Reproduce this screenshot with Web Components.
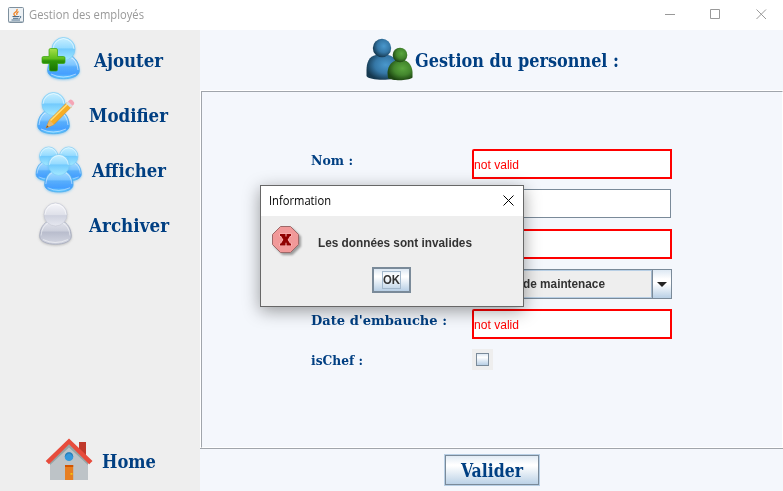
<!DOCTYPE html>
<html lang="fr"><head><meta charset="utf-8"><title>Gestion des employés</title>
<style>html,body{margin:0;width:783px;height:491px;overflow:hidden;background:#f4f7fc}</style></head>
<body><employee-app></employee-app>
<script>
const define=(name,html,cls=HTMLElement)=>customElements.define(name,class extends cls{
  constructor(){super();this.attachShadow({mode:'open'}).innerHTML=html;}
});

/* A one-line label whose glyphs are condensed to the width given in "w". */
customElements.define('fit-text',class extends HTMLElement{
  constructor(){super();this.attachShadow({mode:'open'}).innerHTML=`<style>:host{display:block;flex:none;white-space:nowrap;line-height:24px;height:24px}span{display:inline-block;transform-origin:0 50%}</style><span><slot></slot></span>`;}
  connectedCallback(){
    const s=this.shadowRoot.querySelector('span'),w=+this.getAttribute('w');
    this.style.width=w+'px';
    s.style.transform=`scaleX(${w/s.getBoundingClientRect().width})`;
  }
});

const defs=`<defs>
<linearGradient id="h" x2="0" y2="1"><stop stop-color="#c9f0ff"/><stop offset=".45" stop-color="#96dbff"/><stop offset=".5" stop-color="#72cafd"/><stop offset="1" stop-color="#a4e9ff"/></linearGradient>
<linearGradient id="b" x2="0" y2="1"><stop stop-color="#acdfff"/><stop offset=".42" stop-color="#7cc5ff"/><stop offset=".5" stop-color="#58aefc"/><stop offset=".8" stop-color="#459fff"/><stop offset="1" stop-color="#68d2ff"/></linearGradient>
<linearGradient id="gh" x2="0" y2="1"><stop stop-color="#f6f6fa"/><stop offset=".5" stop-color="#dfe1ea"/><stop offset=".55" stop-color="#cfd2df"/><stop offset="1" stop-color="#e6e8f0"/></linearGradient>
<linearGradient id="gb" x2="0" y2="1"><stop stop-color="#e4e6ee"/><stop offset=".42" stop-color="#cdd0dc"/><stop offset=".5" stop-color="#b9bdcd"/><stop offset="1" stop-color="#d4d7e2"/></linearGradient>
<linearGradient id="p" x2="0" y2="1"><stop stop-color="#a6e04a"/><stop offset=".45" stop-color="#5ebd1c"/><stop offset=".55" stop-color="#2e9608"/><stop offset="1" stop-color="#187300"/></linearGradient>
<radialGradient id="hb" cx=".6" cy=".4" r=".62"><stop stop-color="#4a98cd"/><stop offset=".55" stop-color="#3577a6"/><stop offset="1" stop-color="#163950"/></radialGradient>
<radialGradient id="hg" cx=".6" cy=".4" r=".62"><stop stop-color="#5aa63e"/><stop offset=".55" stop-color="#43862d"/><stop offset="1" stop-color="#1d4612"/></radialGradient>
<filter id="s" x="-20%" y="-20%" width="140%" height="150%"><feDropShadow dx="0" dy="1" stdDeviation="1.1" flood-color="#38a8f0" flood-opacity=".5"/></filter>
<filter id="gs" x="-20%" y="-20%" width="140%" height="150%"><feDropShadow dx="0" dy="1" stdDeviation="1" flood-color="#777" flood-opacity=".4"/></filter></defs>`;
const body='M11 18C4 20 .7 27 .7 34C1 39 8 41.7 16.500 41.700S32 39 32.300 34C32.300 27 29 20 22 18Z';
const person=(x,y,sx,sy,g='')=>`<g transform="translate(${x} ${y}) scale(${sx} ${sy})" filter="url(#${g}s)"><path d="${body}" fill="url(#${g}b)" stroke="${g?'#a5a9bb':'#4aa8ec'}" stroke-width=".8"/><path d="M2 33Q3 23 10 20M31 33Q30 23 23 20M4 37Q16 43 29 37" fill="none" stroke="#fff" stroke-opacity=".5"/><circle cx="16.500" cy="12" r="11.500" fill="url(#${g}h)" stroke="${g?'#c5c8d4':'#7accf5'}" stroke-width=".7"/><path d="M6 12Q7 3 16.500 1.500Q26 3 27 12" fill="none" stroke="#fff" stroke-opacity=".55"/></g>`;
const art={
 add:[48,48,person(12,0,1,1)+`<path d="M15.500 11.500h5.500q1.500 0 1.500 1.500v6.500h6q1.500 0 1.500 1.500v4q0 1.500-1.500 1.500h-6v6q0 1.500-1.500 1.500h-5q-1.500 0-1.500-1.500v-6H8.500q-1.500 0-1.500-1.500v-4q0-1.500 1.500-1.500h5.500v-6.500q0-1.500 1.500-1.500Z" fill="url(#p)" stroke="#35a50a" stroke-width=".7"/>`],
 edit:[48,48,person(6,0,1,1)+`<g transform="translate(-.5 -.5)"><path d="M15.500 36.500L19 28.500L36.500 11L41 15.300L23.500 33Z" fill="#f7ad24" stroke="#d88a18" stroke-width=".6"/><path d="M20 29L37.500 12" stroke="#ffe07c" stroke-width="1.600"/><path d="M15.500 36.500L19 28.500L23.500 33Z" fill="#e9b96c"/><path d="M15.500 36.500l1.200-2.700 1.500 1.500Z" fill="#765033"/><path d="M35.500 12l2-2 4.500 4.300-2 2Z" fill="#d9dee4"/><path d="M37.500 10l1.500-1.500q1.300-1 2.700 .3l1.400 1.400q1.300 1.300 .2 2.700L42 14.300Z" fill="#f5a5b5"/></g>`],
 group:[48,50,person(.5,.5,.8,.82)+person(20.500,.5,.8,.82)+person(9,8,.9,.91)],
 gray:[48,48,person(6,.5,1,1,'g')],
 home:[48,46,`<path d="M34 4h7v18h-7Z" fill="#c0392b"/><path d="M24 4L43 23v19H5V23Z" fill="#bdc3c7"/><path d="M24 5L43 24v3L24 9.500 5 27V25Z" fill="#95a5a6"/><path d="M24 .5L47.500 23l-3.300 3.300L24 6.200 4 26.300 .7 23Z" fill="#e74c3c"/><circle cx="24" cy="18.800" r="4.300" fill="#3498db"/><path d="M19.800 19Q20 14.500 24 14.300t4.200 4.700Q26 15.500 24 15.500t-4.200 3.500Z" fill="#2980b9"/><path d="M20 27h8.200v15H20Z" fill="#e67e22"/><path d="M20 27h8.200v2H20Z" fill="#d35400"/><path d="M25.500 35h2v1.800h-2Z" fill="#f1c40f"/>`],
 staff:[48,44,`<path d="M10 17C3 18 .5 25 .5 32V38C3 43 30 43 32.500 38V31C32 23 28 18 22 17Z" fill="url(#hb)"/><circle cx="16" cy="10" r="9.200" fill="url(#hb)"/><path d="M30 22.500C24 24 21.700 30 21.500 35L22 40C26 43 42 43 46.500 39.500V34C46 28 43 23.500 39 22.500Z" fill="url(#hg)"/><circle cx="34" cy="17" r="7.300" fill="url(#hg)"/>`],
 java:[16,16,`<rect x=".5" y=".5" width="15" height="15" rx="1" fill="#edf1f4" stroke="#7e909e"/><path d="M1 14.500h14" stroke="#b2c0ca"/><path d="M9 2Q9.500 4 7 5.500T7.500 9M10.500 4.500Q8 6 9 8" fill="none" stroke="#ed7e1d" stroke-width="1.200"/><path d="M4.500 9.500h6.500M5 11.300h5.500M3.500 13h8.500M11.500 9.300q2.200 0 1 1.500l-1.200 .7" fill="none" stroke="#4b6c89"/>`],
 error:[34,34,`<filter id="f" x="-20%" y="-20%" width="150%" height="150%"><feDropShadow dx="2" dy="2" stdDeviation="1.200" flood-opacity=".35"/></filter><path d="M8.500 .5H18.500L26.500 8.500V18.500L18.500 26.500H8.500L.5 18.500V8.500Z" fill="#f19999" stroke="#9d6868" filter="url(#f)"/><path d="M8 8h5.500v2l.5 1 .5-1V8H19v2h-1l-2.300 3.700L18 17.500h1v2h-4.500v-2l-.5-1.200-.5 1.200v2H8v-2h1l2.300-3.800L9 10H8Z" fill="#900000" stroke="#ffbdbd" stroke-width="1.200" paint-order="stroke"/>`]
};
customElements.define('app-icon',class extends HTMLElement{
  constructor(){super();this.attachShadow({mode:'open'});}
  connectedCallback(){const [w,h,m]=art[this.getAttribute('name')];this.shadowRoot.innerHTML=`<style>:host{display:block;flex:none;width:${w}px;height:${h}px}svg{display:block;overflow:visible}</style><svg width="${w}" height="${h}">${defs}${m}</svg>`;}
});

define('title-bar',`<style>:host{display:flex;height:30px;background:#fff;align-items:center;padding-left:8px;box-sizing:border-box;color:#999;font:12px "Open Sans",sans-serif}fit-text{margin-left:5px}svg{margin-left:auto;display:block}</style>
<app-icon name="java"></app-icon><fit-text w="115">Gestion des employés</fit-text><svg width="118" height="30" fill="none" stroke="#999"><path d="M0 14.500h10"/><path d="M45.500 9.500h9v9h-9Z"/><path d="M91.500 9.500l9.500 9.500M101 9.500l-9.500 9.500"/></svg>`);

define('menu-item',`<style>:host{display:flex;align-items:center;height:55px;color:#003f82;font:bold 18.200px "DejaVu Serif Condensed","DejaVu Serif",serif;font-stretch:condensed}</style><slot></slot>`);

define('side-menu',`<style>:host{display:flex;flex-direction:column;width:200px;background:#eee;padding-top:3px;box-sizing:border-box}
.a{padding-left:35px;gap:11px}.b{padding-left:31px;gap:10px}.c{padding-left:35px;gap:9px}.d{padding-left:33px;gap:8px}.e{margin-top:auto;margin-bottom:2px;padding-left:45px;gap:9px}.e app-icon{margin-top:-2px}</style>
<menu-item class="a"><app-icon name="add"></app-icon><fit-text w="69">Ajouter</fit-text></menu-item>
<menu-item class="b"><app-icon name="edit"></app-icon><fit-text w="79">Modifier</fit-text></menu-item>
<menu-item class="c"><app-icon name="group"></app-icon><fit-text w="74">Afficher</fit-text></menu-item>
<menu-item class="d"><app-icon name="gray"></app-icon><fit-text w="80">Archiver</fit-text></menu-item>
<menu-item class="e"><app-icon name="home"></app-icon><fit-text w="54">Home</fit-text></menu-item>`);

define('text-field',`<style>:host{display:flex;align-items:center;box-sizing:border-box;width:200px;height:30px;background:#fff;border:2px solid #f00;border-top-left-radius:2px;padding-top:2px;color:#f00;font:12px "Liberation Sans",sans-serif}
:host([plain]){border:1px solid #7a8a99;width:199px;height:29px;border-radius:0}</style><slot></slot>`);

define('combo-box',`<style>:host{display:flex;box-sizing:border-box;width:200px;height:30px;border:1px solid #7a8a99;background:#eee;color:#333;font:bold 12px "Liberation Sans",sans-serif}
.v{flex:1;min-width:0;display:flex;align-items:center;padding-left:0;box-sizing:border-box;border:1px solid #b8cfe5;border-right-color:#a3b8cc}
.v fit-text{margin-left:-15px}
.d{width:18px;flex:none;border-left:1px solid #7a8a99;background:linear-gradient(#dde8f3,#fff 32%,#fff 48%,#b8cfe5);display:flex;align-items:center;justify-content:center}</style>
<div class="v"><fit-text w="146"><slot></slot></fit-text></div><div class="d"><svg width="10" height="5"><path d="M0 0h10L5 5Z" fill="#222"/></svg></div>`);

define('check-box',`<style>:host{display:grid;place-items:center;width:21px;height:21px;background:#eee}i{display:block;box-sizing:border-box;width:13px;height:13px;border:1px solid #7a8a99;background:linear-gradient(#dde8f3,#fff 30%,#b8cfe5)}</style><i></i>`);

define('form-row',`<style>:host{display:grid;grid-template-columns:161px 200px;height:40px;align-items:start;color:#003f82;font:bold 13.600px "DejaVu Serif Condensed","DejaVu Serif",serif;font-stretch:condensed}</style><slot name="l"></slot><slot></slot>`);

define('main-area',`<style>:host{display:flex;flex-direction:column;flex:1;min-width:0;background:#f4f7fc;color:#003f82;font:bold 18.200px "DejaVu Serif Condensed","DejaVu Serif",serif;font-stretch:condensed}
header{height:61px;display:flex;align-items:center;padding-left:166px;gap:1px;box-sizing:border-box;border-bottom:1px solid #fff}
header fit-text{margin-top:2px}
.p{height:357px;box-sizing:border-box;border:1px solid #a0a5ab;border-bottom-color:#fff;border-right-color:#fff;margin-left:1px;box-shadow:-1px 0 #fff;padding:57px 0 0 109px}
.l{margin-top:-1px}
footer{flex:1;display:flex;align-items:flex-start;padding-left:244px;padding-top:5px;border-top:1px solid #a0a5ab}
button{all:unset;box-sizing:border-box;display:flex;align-items:center;justify-content:center;padding-top:2px;width:96px;height:32px;border:1px solid #b8cfe5;outline:1px solid #7a8a99;outline-offset:-2px;background:linear-gradient(#dde8f3,#fff 32%,#fff 36%,#b8cfe5)}
</style><header><app-icon name="staff"></app-icon><fit-text w="204">Gestion du personnel :</fit-text></header>
<div class="p">
<form-row><fit-text slot="l" class="l" w="42">Nom :</fit-text><text-field><fit-text w="45">not valid</fit-text></text-field></form-row>
<form-row><text-field plain></text-field><span slot="l"></span></form-row>
<form-row><span slot="l"></span><text-field></text-field></form-row>
<form-row><span slot="l"></span><combo-box>Technicien de maintenace</combo-box></form-row>
<form-row><fit-text slot="l" class="l" w="136">Date d'embauche :</fit-text><text-field><fit-text w="45">not valid</fit-text></text-field></form-row>
<form-row><fit-text slot="l" class="l" w="52">isChef :</fit-text><check-box></check-box></form-row>
</div><footer><button><fit-text w="62">Valider</fit-text></button></footer>`);

define('message-dialog',`<style>:host{display:flex;flex-direction:column;box-sizing:border-box;width:264px;height:122px;border:1px solid #676767;background:#eee;box-shadow:0 4px 16px rgba(0,0,0,.38);color:#333;font:bold 12px "Liberation Sans",sans-serif}
header{height:30px;flex:none;background:#fff;display:flex;align-items:center;justify-content:space-between;padding:0 9px 0 8px;box-sizing:border-box;color:#000;font:12px "Open Sans",sans-serif}
header svg{margin-top:-2px}
.m{height:50px;display:flex;padding:10px 0 0 11px;box-sizing:border-box;gap:12px}.m fit-text{margin-top:5px}
button{all:unset;box-sizing:border-box;width:39px;height:26px;border:2px solid #7a8a99;margin:1px 0 0 111px;display:grid;place-items:center;background:linear-gradient(#dde8f3,#fff 32%,#fff 36%,#b8cfe5)}
.f{box-sizing:border-box;width:19px;height:18px;border:1px solid #a3b8cc;display:flex;align-items:center}
</style><header><fit-text w="62">Information</fit-text><svg width="11" height="11" stroke="#000" fill="none"><path d="M.5 .5l10 10M10.500 .5l-10 10"/></svg></header>
<div class="m"><app-icon name="error"></app-icon><fit-text w="154">Les données sont invalides</fit-text></div><button><span class="f"><fit-text w="17">OK</fit-text></span></button>`);

define('employee-app',`<style>:host{display:flex;flex-direction:column;width:783px;height:491px;position:relative}.r{flex:1;display:flex;min-height:0}message-dialog{position:absolute;left:260px;top:185px}</style><title-bar></title-bar><div class="r"><side-menu></side-menu><main-area></main-area></div><message-dialog></message-dialog>`);
</script></body></html>
